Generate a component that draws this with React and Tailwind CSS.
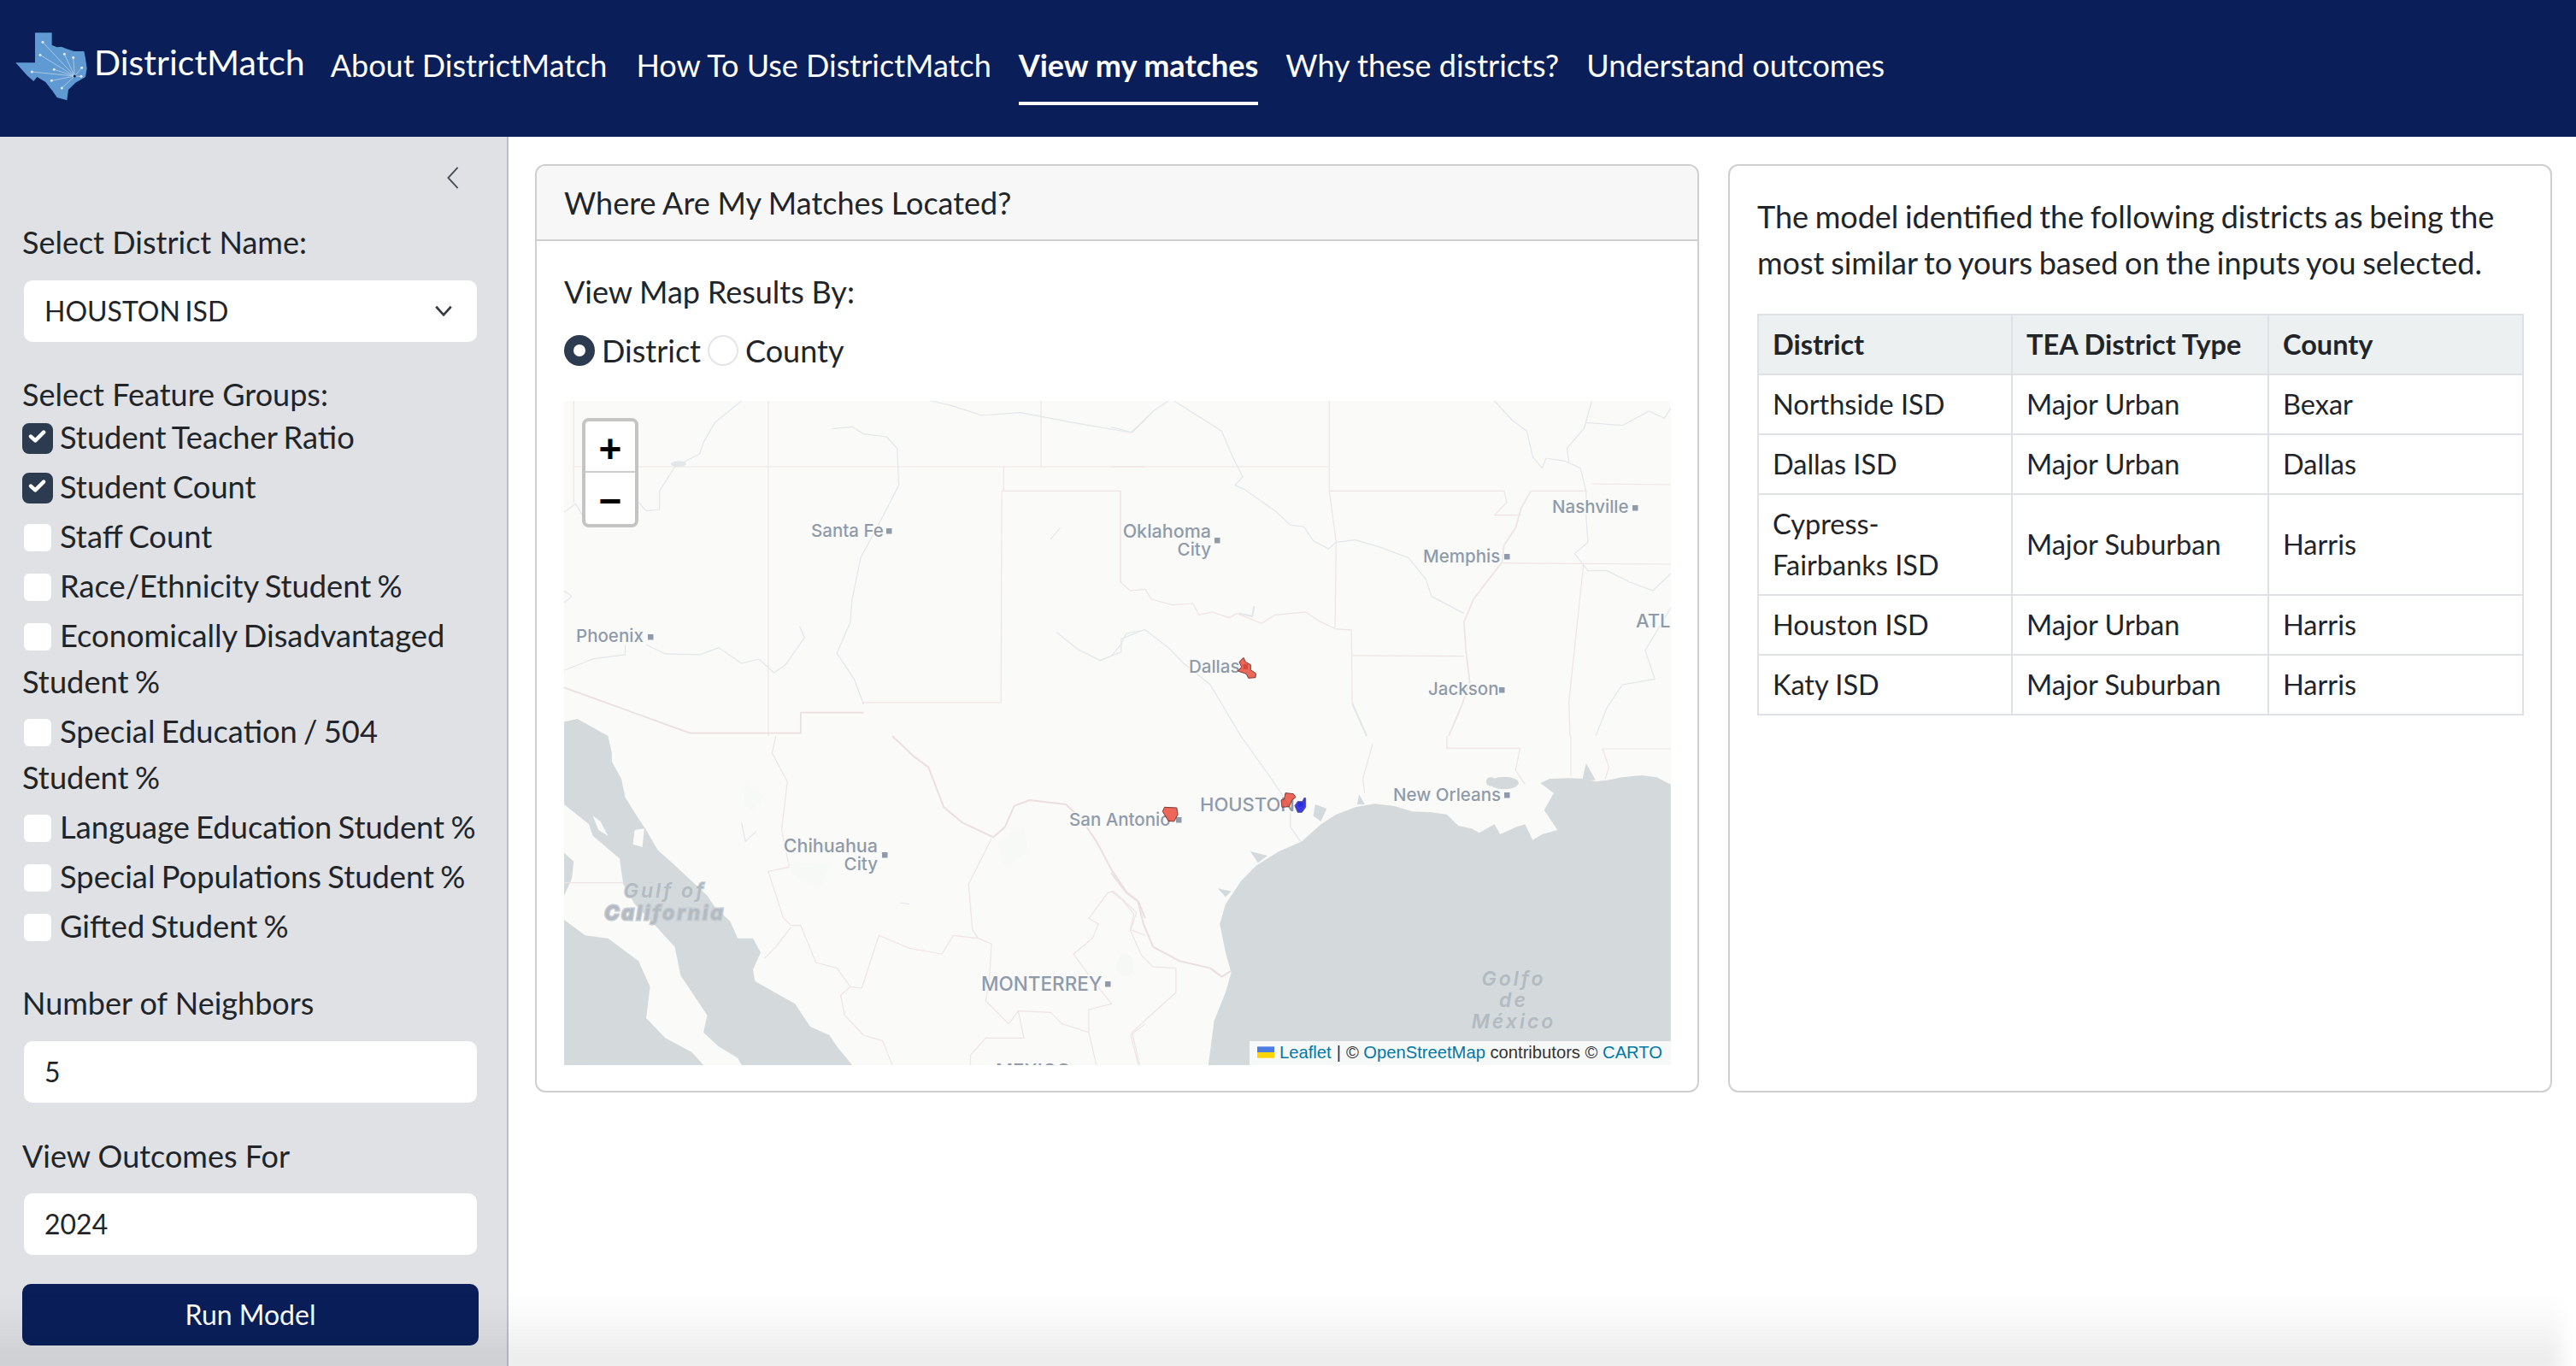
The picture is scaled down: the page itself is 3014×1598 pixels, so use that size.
import React from "react";

const FONT = "font-['Lato','Noto_Sans',sans-serif]";

function Logo() {
  const dots = [[150,118],[141,163],[226,160],[257,172],[287,208],[285,238],[190,214],[112,222],[181,253],[217,279]];
  return (
    <svg viewBox="54 84 252 240" className="w-[84px] h-[80px] shrink-0">
      <polygon fill="#5f9ad3" points="123,85 182,85 182,128 200,136 215,134 235,142 260,150 295,150 300,175 305,210 300,240 265,260 240,285 235,322 200,312 185,290 160,258 130,240 118,255 95,235 55,190 123,190" />
      {dots.map(([x, y]) => (
        <g key={x}>
          <line x1={x} y1={y} x2="262" y2="237" stroke="#cfdcea" strokeWidth="2" />
          <circle cx={x} cy={y} r="4.5" fill="#e4e8ee" />
        </g>
      ))}
      <circle cx="262" cy="237" r="4.5" fill="#0a1f44" />
    </svg>
  );
}

function Check({ label, checked }) {
  return (
    <div className="mb-[4px] text-[36.3px] leading-[54px] [word-spacing:-2px]">
      <span className={`inline-block align-[-6px] w-[36px] h-[36px] mr-[8px] rounded-[8px] border-2 ${checked ? "bg-[#2c3b50] border-[#2c3b50]" : "bg-white border-[#dfe1e5]"}`}>
        {checked && (
          <svg viewBox="0 0 36 36" className="w-full h-full -mt-[2px]">
            <path d="M9 17.5 L15 23 L26 12" fill="none" stroke="#fff" strokeWidth="5" strokeLinecap="round" strokeLinejoin="round" />
          </svg>
        )}
      </span>
      {label}
    </div>
  );
}

function Field({ children }) {
  return <div className="h-[72px] mx-[2px] bg-white rounded-[10px] pl-[24px] flex items-center text-[32px] relative">{children}</div>;
}

function Line({ p, c = "#efe4e4", w = 1.2 }) {
  return <polyline points={p} fill="none" stroke={c} strokeWidth={w} vectorEffect="non-scaling-stroke" strokeLinejoin="round" />;
}

const RIVER = "#e2e7ea";
const WATER = "#d4dadc";

function Label({ x, y, t, size = 20.5, anchor = "start" }) {
  return (
    <text x={x} y={y} textAnchor={anchor} fontSize={size} fontWeight="500" fill="#8f9aaa" stroke="#fafaf8" strokeWidth="3" paintOrder="stroke" style={{ fontFamily: "Inter, 'Open Sans', sans-serif" }}>{t}</text>
  );
}

function Sea({ x, y, t, heavy }) {
  return (
    <text x={x} y={y} textAnchor="middle" fontSize="23" fontStyle="italic" fontWeight={heavy ? "700" : "600"} letterSpacing="3" fill="#b2bac2" stroke={heavy ? "#c6ccd2" : "#d4dadc"} strokeWidth={heavy ? 3 : 2} paintOrder="stroke" style={{ fontFamily: "Inter, 'Open Sans', sans-serif" }}>{t}</text>
  );
}

function Sq({ x, y }) {
  return <rect x={x} y={y} width="6.5" height="6.5" fill="#8f9aaa" />;
}

function MapArt() {
  return (
    <svg viewBox="0 0 1295 777" className="block w-full h-full" preserveAspectRatio="none">
      <rect width="1295" height="777" fill="#fafaf8" />

      {/* north-west quadrant */}
      <g transform="translate(-20,-8) scale(0.4464,0.3333)">
        <Line p="70,24 70,380" />
        <Line p="70,255 1568,255" />
        <Line p="580,24 580,1200" />
        <Line p="1197,255 1197,340 1192,340 1190,1083 828,1083" />
        <Line p="1192,340 1503,340 1503,660" />
        <Line p="1295,24 1295,255" />
        <Line p="45,1030 375,1190 665,1190 665,1118 830,1118" w={1.8} c="#ebdfdf" />
        <Line c={RIVER} p="510,24 440,100 410,170 400,210 335,255 295,340 295,405 260,410 240,380" />
        <Line c={RIVER} p="45,415 75,385 100,440 140,460" />
        <Line c={RIVER} p="747,122 800,115 830,140 890,150 918,190 922,320 880,430 822,575 800,720 795,800 760,910 805,1000 830,1090" />
        <Line c={RIVER} p="45,970 120,930 205,915 205,880" />
        <Line c={RIVER} p="260,880 310,912 400,915 450,890 510,945 555,930 595,978 625,950 675,855 662,815" />
        <Line c={RIVER} p="1005,24 1060,40 1140,75 1240,65 1370,98 1530,135 1568,90" />
        <Line c={RIVER} p="1335,835 1390,895 1450,935 1505,905 1505,860 1568,825" />
        <Line c={RIVER} p="45,690 65,710 45,732" />
        <Line c={RIVER} p="1345,470 1320,510" />
        <ellipse cx="345" cy="245" rx="20" ry="10" fill={RIVER} />
      </g>

      {/* north-east quadrant */}
      <g transform="translate(640,-8) scale(0.4464,0.3333)">
        <Line p="0,255 572,255" />
        <Line p="572,24 572,340 1030,340 1037,380 1005,425 1075,425" />
        <Line p="572,340 590,520 587,820" />
        <Line p="25,340 25,660 50,690 90,685 105,720 160,740 215,735 230,775 265,765 310,785 330,770 395,805 430,775 510,765 550,800 590,825 630,828 632,1085" />
        <Line p="632,918 925,920" />
        <Line p="1100,340 1075,400 1060,470 1030,530 1025,590 990,650 950,720 925,800 930,900 940,1010 920,1090 885,1200" w={1.8} />
        <Line p="1027,593 1467,597" />
        <Line p="1100,340 1245,340" />
        <Line p="1258,315 1467,318" />
        <Line p="1238,600 1200,1080 1203,1200" />
        <Line c={RIVER} p="0,115 55,135 110,60 150,24" />
        <Line c={RIVER} p="165,24 290,130 320,225 345,290 325,320 350,335 430,410 470,460 505,465 530,515 570,543 590,520 640,512 700,535 780,575 825,650 840,710 925,770" />
        <Line c={RIVER} p="1005,24 1050,90 1090,130 1105,220 1130,260 1140,225 1190,235 1230,260 1245,340 1245,430 1250,520 1215,560 1250,620 1300,620 1360,660 1420,690 1467,630" />
        <Line c={RIVER} p="1260,24 1240,120 1195,190 1200,240" />
        <Line c={RIVER} p="1245,100 1340,110 1410,60 1450,85 1467,50" />
        <Line c={RIVER} p="0,920 25,880 40,840 90,828 150,890 190,945 260,1020 340,1200" />
        <Line c={RIVER} p="1467,750 1400,900 1425,1000 1340,1020 1300,1100 1270,1200" />
        <Line c={RIVER} w={2.2} p="632,1085 670,1200" />
        <Line c={RIVER} w={2.2} p="335,770 370,780 375,745" />
      </g>

      {/* south-west quadrant */}
      <g transform="translate(-20,392) scale(0.4464,0.3333)">
        <polygon fill={WATER} points="45,-50 80,-60 120,-30 160,0 170,60 170,90 195,150 205,215 240,290 260,330 290,400 340,460 420,560 440,600 480,650 500,710 540,710 560,760 540,820 545,860 610,910 650,940 690,1020 740,1050 760,1090 800,1155 510,1155 500,1130 450,1090 410,1040 420,980 380,900 350,840 335,740 280,660 230,590 200,520 190,430 120,350 110,310 45,240" />
        <polygon fill={WATER} points="45,645 100,700 160,710 240,790 270,880 260,990 310,1060 380,1110 410,1155 45,1155" />
        <polygon fill={WATER} points="45,410 70,440 65,500 45,560" />
        <polygon fill="#fafaf8" points="120,280 140,300 160,350 135,330" />
        <polygon fill="#fafaf8" points="230,330 255,325 250,390 225,380" />
        <polygon fill="#fafaf8" points="295,690 315,720 300,735" />
        <Line p="45,515 200,515" />
        <Line p="600,0 590,60 630,160 615,330 635,460 580,475 620,640 640,665 665,665 705,795 760,815 795,880 825,885 870,700 950,745 1035,765 1065,700 1130,710 1165,730 1160,850" />
        <Line p="640,670 600,740 570,780" />
        <Line p="795,880 770,910 780,980 830,1050 880,1070 905,1155" />
        <Line p="1165,360 1105,520 1115,680 1130,710" />
        <Line p="1160,850 1150,930 1210,1010 1235,965 1320,970 1350,1010 1420,1040 1440,1155" />
        <Line p="1235,965 1250,1060 1150,1060 1110,1120 1110,1155" />
        <Line p="1420,1040 1420,960 1480,940 1420,840 1380,765 1430,710 1445,660 1420,640 1470,550 1485,545 1510,575 1545,620 1530,680 1568,700" />
        <Line p="1568,1010 1530,1050 1550,1155" />
        <Line p="905,0 960,70 1000,110 1020,180 1040,250 1090,305 1170,355 1200,320 1225,245 1265,225 1360,240 1400,290 1440,370 1480,470 1520,550 1550,580 1568,640" w={2} c="#ebdfdf" />
        <Line c={RIVER} p="510,305 520,370 548,335" />
        <Line c={RIVER} p="925,585 950,590" />
        <polygon fill="#f7f9f6" points="520,170 570,210 540,260 515,240" />
        <polygon fill="#f7f9f6" points="630,440 740,450 720,530 650,490" />
        <polygon fill="#f7f9f6" points="1180,370 1250,320 1260,410 1200,460" />
        <ellipse cx="1515" cy="805" rx="22" ry="40" fill="#f6f8f5" />
      </g>

      {/* south-east quadrant */}
      <g transform="translate(640,392) scale(0.4464,0.3333)">
        <polygon fill={WATER} points="1467,170 1430,145 1390,138 1340,145 1300,155 1270,160 1240,150 1200,148 1150,150 1125,165 1160,200 1135,260 1170,330 1130,345 1105,365 1085,310 1060,320 1020,345 1005,310 965,340 945,325 910,315 880,275 840,268 790,265 740,245 690,238 640,250 590,275 550,310 500,370 440,405 380,455 340,510 300,590 285,660 300,760 315,830 300,900 270,1000 255,1155 1467,1155" />
        <ellipse cx="1030" cy="165" rx="38" ry="22" fill={WATER} />
        <ellipse cx="995" cy="160" rx="12" ry="16" fill={WATER} />
        <polygon fill={WATER} points="1245,95 1270,155 1235,155" />
        <polygon fill={WATER} points="535,240 565,255 550,300 530,280" />
        <polygon fill={WATER} points="365,405 410,420 385,445" />
        <polygon fill={WATER} points="280,535 315,545 300,565" />
        <polygon fill={WATER} points="650,205 665,240 645,240" />
        <Line c={RIVER} p="340,0 420,150 470,250 470,320 497,370" />
        <Line p="685,30 660,150 665,200" />
        <Line p="880,0 880,43 1072,43 1060,120 1085,170" />
        <Line p="1205,0 1205,140" />
        <Line p="1467,45 1288,45 1305,110 1295,150" />
        <Line p="0,480 40,550 70,580 85,660 110,740 180,790 260,815 290,845 315,825" w={2} c="#ebdfdf" />
        <Line p="0,545 30,575 60,625 50,680 80,770 110,810 170,815 170,900 120,960 55,1040 75,1155" />
      </g>

      <Label x={289} y={159} t="Santa Fe" /><Sq x={377} y={149} />
      <Label x={14} y={282} t="Phoenix" /><Sq x={98} y={273} />
      <Label x={757} y={160} t="Oklahoma" anchor="end" size={21.5} />
      <Label x={757} y={181} t="City" anchor="end" /><Sq x={761} y={160} />
      <Label x={1005} y={189} t="Memphis" /><Sq x={1100} y={179} />
      <Label x={1156} y={131} t="Nashville" /><Sq x={1250} y={122} />
      <Label x={1254} y={265} t="ATL" size={22} />
      <Label x={731} y={318} t="Dallas" /><Label x={1011} y={344} t="Jackson" /><Sq x={1094} y={335} />
      <Label x={744} y={480} t="HOUSTON" size={22} />
      <Label x={591} y={497} t="San Antonio" /><Sq x={716} y={487} />
      <Label x={970} y={468} t="New Orleans" /><Sq x={1100} y={458} />
      <Label x={367} y={528} t="Chihuahua" anchor="end" size={21.5} />
      <Label x={367} y={549} t="City" anchor="end" /><Sq x={372} y={528} />
      <Label x={488} y={690} t="MONTERREY" size={22.5} /><Sq x={633} y={679} />
      <Label x={505} y={791} t="MEXICO" size={22} />
      <Sea x={118} y={581} t="Gulf of" />
      <Sea x={118} y={607} t="California" heavy />
      <Sea x={1111} y={684} t="Golfo" />
      <Sea x={1111} y={709} t="de" />
      <Sea x={1111} y={734} t="México" />

      {/* matched districts */}
      <g transform="translate(740,272) scale(0.3333)">
        <polygon fill="#ec5a4b" fillOpacity="0.92" stroke="#7d3a36" strokeWidth="1" vectorEffect="non-scaling-stroke" points="165,85 150,100 158,118 145,132 175,142 182,157 207,155 208,140 190,128 190,110 172,100" />
        <rect x="164" y="108" width="16" height="18" fill="#d9483c" />
        <polygon fill="#ec5a4b" fillOpacity="0.92" stroke="#7d3a36" strokeWidth="1" vectorEffect="non-scaling-stroke" points="312,560 308,582 297,585 300,610 325,608 335,585 348,575 340,563" />
        <polygon fill="#3a3ae8" stroke="#55557a" strokeWidth="1" vectorEffect="non-scaling-stroke" points="378,577 383,578 383,610 370,628 355,628 345,605 355,590 372,590" />
        <rect x="357" y="592" width="16" height="16" fill="#2c2cd8" />
      </g>
      <g transform="translate(640,392) scale(0.4464,0.3333)">
        <polygon fill="#ec5a4b" fillOpacity="0.92" stroke="#7d3a36" strokeWidth="1" vectorEffect="non-scaling-stroke" points="140,250 172,252 175,275 165,300 150,298 135,265" />
      </g>
    </svg>
  );
}

const CYPRESS = [<>Cypress-<br />Fairbanks ISD</>, "Major Suburban", "Harris"];

const ROWS = [
  ["Northside ISD", "Major Urban", "Bexar"],
  ["Dallas ISD", "Major Urban", "Dallas"],
  CYPRESS,
  ["Houston ISD", "Major Urban", "Harris"],
  ["Katy ISD", "Major Suburban", "Harris"],
];

export default function App() {
  return (
    <div className={`${FONT} relative w-[3014px] h-[1598px] overflow-hidden bg-white text-[#212529] flex flex-col`}>
      <header className="h-[160px] shrink-0 bg-[#0a1f5a] flex items-start text-white">
        <div className="flex items-start ml-[18px] mt-[38px]">
          <Logo />
          <span className="ml-[8px] mt-[8px] text-[41px] leading-[54px]">DistrictMatch</span>
        </div>
        <nav className="flex ml-[30px] mt-[49px] gap-[32px] text-[36px] leading-[54px]">
          <span className="mr-[2px]">About DistrictMatch</span>
          <span>How To Use DistrictMatch</span>
          <span className="font-bold border-b-[4px] border-white h-[74px]">View my matches</span>
          <span>Why these districts?</span>
          <span>Understand outcomes</span>
        </nav>
      </header>

      <div className="flex-1 flex min-h-0">
        <aside className="w-[595px] shrink-0 bg-[#dfe1e5] border-r-2 border-[#bdc1c7] pl-[26px] pr-[33px]">
          <div className="h-[96px] flex justify-end items-end">
            <svg viewBox="0 0 16 30" className="w-[16px] h-[28px] mr-[22px] mb-[34px]">
              <path d="M14 2 L2 15 L14 28" fill="none" stroke="#4a4f57" strokeWidth="2" />
            </svg>
          </div>
          <div className="h-[54px] text-[36px] leading-[54px] mb-[18px]">Select District Name:</div>
          <Field>
            <span className="[word-spacing:-2.5px]">HOUSTON ISD</span>
            <svg viewBox="0 0 24 16" className="absolute right-[28px] top-[29px] w-[22px] h-[14px]">
              <path d="M2 2 L12 13 L22 2" fill="none" stroke="#343a40" strokeWidth="3" />
            </svg>
          </Field>
          <div className="h-[50px] mt-[34px] text-[36px] leading-[54px]">Select Feature Groups:</div>
          <Check label="Student Teacher Ratio" checked />
          <Check label="Student Count" checked />
          <Check label="Staff Count" />
          <Check label="Race/Ethnicity Student %" />
          <Check label="Economically Disadvantaged Student %" />
          <Check label="Special Education / 504 Student %" />
          <Check label="Language Education Student %" />
          <Check label="Special Populations Student %" />
          <Check label="Gifted Student %" />
          <div className="h-[54px] mt-[36px] mb-[18px] text-[36px] leading-[54px]">Number of Neighbors</div>
          <Field>5</Field>
          <div className="h-[54px] mt-[35px] mb-[17px] text-[36px] leading-[54px]">View Outcomes For</div>
          <Field>2024</Field>
          <button className="mt-[34px] w-full h-[72px] rounded-[10px] bg-[#0a1f5a] text-white text-[32px] leading-[48px]">Run Model</button>
        </aside>

        <main className="flex-1 flex items-start gap-[34px] pt-[32px] pl-[31px] pr-[28px]">
          <section className="w-[1362px] h-[1086px] shrink-0 border-2 border-[#cfcfcf] rounded-[12px] overflow-hidden">
            <div className="h-[88px] bg-[#f7f7f7] border-b-2 border-[#cfcfcf] pl-[32px] flex items-center text-[36px] [word-spacing:-0.5px]">Where Are My Matches Located?</div>
            <div className="pl-[32px] pr-[32px] pt-[32px]">
              <div className="h-[54px] text-[36px] leading-[54px] mb-[15px] [word-spacing:-0.5px]">View Map Results By:</div>
              <div className="flex items-center h-[54px] text-[36px] mb-[32px]">
                <span className="w-[36px] h-[36px] rounded-full bg-white border-[11px] border-[#2c3b50] mr-[8px]"></span>
                <span>District</span>
                <span className="w-[36px] h-[36px] rounded-full bg-white border-2 border-[#e3e5e8] ml-[8px] mr-[8px]"></span>
                <span>County</span>
              </div>
              <div className="relative w-[1295px] h-[777px] overflow-hidden">
                <MapArt />
                <div className="absolute left-[21px] top-[20px] w-[66px] h-[128px] border-[4px] border-[#c4c4c2] rounded-[8px] bg-white flex flex-col overflow-hidden font-['Liberation_Sans',sans-serif] font-bold text-black">
                  <div className="h-[60px] flex items-center justify-center text-[46px] leading-none border-b-2 border-[#cccccc] pt-[6px]">+</div>
                  <div className="flex-1 flex items-center justify-center text-[46px] leading-none pt-[6px]">−</div>
                </div>
                <div className="absolute right-0 bottom-0 h-[28px] w-[493px] bg-[#f7f8f8] flex items-center pb-[2px] pl-[9px] text-[20.2px] text-[#333333] whitespace-nowrap font-['Liberation_Sans',sans-serif]">
                  <svg viewBox="0 0 12 8" className="w-[20px] h-[14px] mr-[6px]">
                    <rect width="12" height="4" fill="#4C7BE1" />
                    <rect y="4" width="12" height="4" fill="#FFD500" />
                  </svg>
                  <span className="text-[#0078a8]">Leaflet</span>
                  <span className="mx-[6px]">|</span>
                  <span>©&nbsp;</span>
                  <span className="text-[#0078a8]">OpenStreetMap</span>
                  <span>&nbsp;contributors ©&nbsp;</span>
                  <span className="text-[#0078a8]">CARTO</span>
                </div>
              </div>
            </div>
          </section>

          <section className="w-[964px] h-[1086px] shrink-0 border-2 border-[#cfcfcf] rounded-[12px] pl-[32px] pr-[32px] pt-[32px]">
            <p className="text-[36px] leading-[54px] mb-[33px] [word-spacing:-1.6px]">The model identified the following districts as being the most similar to yours based on the inputs you selected.</p>
            <table className="w-[895px] border-collapse border-2 border-[#dee2e6] text-[32.5px] leading-[48px] table-fixed">
              <colgroup>
                <col className="w-[297px]" />
                <col className="w-[300px]" />
                <col className="w-[298px]" />
              </colgroup>
              <thead>
                <tr className="bg-[#ecf0f1] font-bold text-left">
                  <th className="border-2 border-[#dee2e6] px-[16px] py-[10px] font-bold">District</th>
                  <th className="border-2 border-[#dee2e6] px-[16px] py-[10px] font-bold whitespace-nowrap">TEA District Type</th>
                  <th className="border-2 border-[#dee2e6] px-[16px] py-[10px] font-bold">County</th>
                </tr>
              </thead>
              <tbody>
                {ROWS.map((r, k) => (
                  <tr key={k}>
                    {r.map((c, i) => (
                      <td key={i} className="border-2 border-[#dee2e6] px-[16px] py-[10px]">{c}</td>
                    ))}
                  </tr>
                ))}
              </tbody>
            </table>
          </section>
        </main>
      </div>

      <div className="absolute left-[-30px] right-[16px] bottom-[-10px] h-[90px] bg-gradient-to-b from-transparent to-[#00000017] blur-[10px] pointer-events-none"></div>
    </div>
  );
}
